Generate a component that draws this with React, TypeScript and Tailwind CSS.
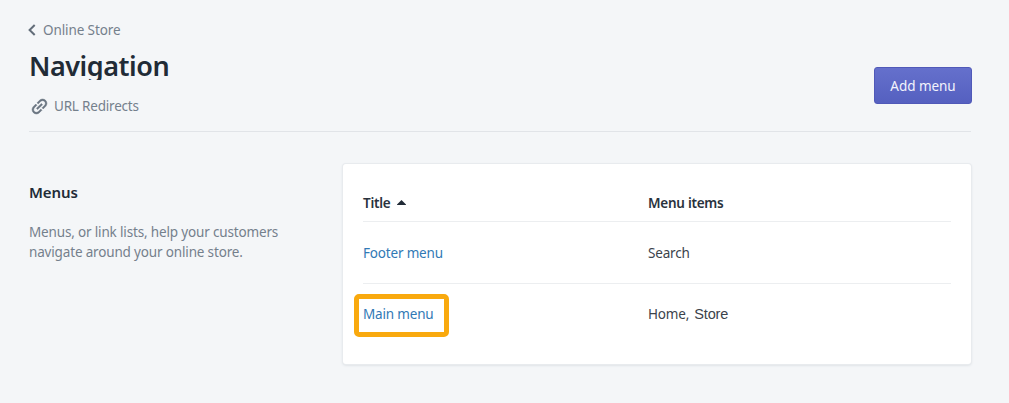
const menus = [
  { title: "Footer menu", items: <>Search</>, highlighted: false },
  {
    title: "Main menu",
    items: (
      <>
        Home,
        <span className="ml-[5px] font-['Liberation_Sans',sans-serif] text-[14.5px] tracking-[-0.1px]">Store</span>
      </>
    ),
    highlighted: true,
  },
];

function LinkIcon() {
  return (
    <svg viewBox="0 0 24 24" className="size-[21px] -rotate-45 fill-[#6b7682]">
      <path d="M3.9 12c0-1.71 1.39-3.1 3.1-3.1h4V7H7c-2.76 0-5 2.24-5 5s2.24 5 5 5h4v-1.9H7c-1.71 0-3.1-1.39-3.1-3.1zM8 13h8v-2H8v2zm9-6h-4v1.9h4c1.71 0 3.1 1.39 3.1 3.1s-1.39 3.1-3.1 3.1h-4V17h4c2.76 0 5-2.24 5-5s-2.24-5-5-5z" className="stroke-[#6b7682] stroke-[0.5]" />
    </svg>
  );
}

export default function App() {
  return (
    <main className="h-[403px] overflow-hidden bg-[#f4f6f8] pt-5 pr-[38px] pl-[29px] font-['Noto_Sans',sans-serif] text-[13.5px] leading-5 text-[#3b434b]">
      <header className="flex h-28 justify-between border-b border-[#e1e4e8]">
        <div>
          <a className="flex h-5 items-center text-[#74808c]">
            <svg viewBox="0 0 8 12" className="mr-[7px] -mt-px -ml-px h-3 w-2 fill-none stroke-[#626d79] stroke-2">
              <path d="M6.7 1 1.6 6l5.1 5" />
            </svg>
            <span className="tracking-[-0.1px]">Online Store</span>
          </a>
          <h1 className="mt-1 h-9 overflow-hidden text-[27px] leading-[44px] font-semibold tracking-[-0.45px] text-[#212b36]">
            Navigation
          </h1>
          <a className="mt-4 flex h-5 items-center gap-1">
            <LinkIcon />
            <span className="tracking-[-0.2px] text-[#74808c]">URL Redirects</span>
          </a>
        </div>
        <button className="mt-[47px] -mr-px h-[37px] w-[98px] rounded-[3px] border border-[#5059b8] bg-linear-to-b from-[#6570cc] to-[#5560c0] tracking-[-0.05px] text-[#f3f4fc]">
          Add menu
        </button>
      </header>

      <div className="flex pt-8">
        <section className="w-[314px] shrink-0 pt-[18px]">
          <h2 className="text-[15px] font-semibold tracking-[-0.1px] text-[#212b36]">Menus</h2>
          <p className="mt-5 w-[280px] tracking-[-0.16px] text-[#74808c]">
            Menus, or link lists, help your customers navigate around your online store.
          </p>
        </section>

        <section className="h-[200px] flex-1 rounded-[3px] bg-white px-5 pt-5 shadow-[0_0_0_1px_#e8ebee,0_1px_3px_#cdd2d7]">
          <div className="grid h-[38px] grid-cols-[285px_1fr] items-center border-b border-[#eceef0] font-semibold tracking-[-0.25px] text-[#29323d]">
            <span className="flex items-center gap-[7px]">
              Title
              <svg viewBox="0 0 9 5" className="h-[5px] w-[9px] fill-[#212b36]">
                <path d="M4.5 0 9 4.4V5H0v-.6z" />
              </svg>
            </span>
            <span>Menu items</span>
          </div>
          {menus.map((menu) => (
            <div
              key={menu.title}
              className="grid h-[61.5px] grid-cols-[285px_1fr] items-center border-b border-[#eceef0] tracking-[-0.18px] last:border-0 not-last:pt-px"
            >
              <a className="relative w-fit text-[#3179b5]">
                {menu.title}
                {menu.highlighted && (
                  <span className="absolute -top-[10px] -left-[9px] h-[43px] w-[95px] rounded-[5px] border-[5px] border-[#f9a90e]" />
                )}
              </a>
              <span>{menu.items}</span>
            </div>
          ))}
        </section>
      </div>
    </main>
  );
}
